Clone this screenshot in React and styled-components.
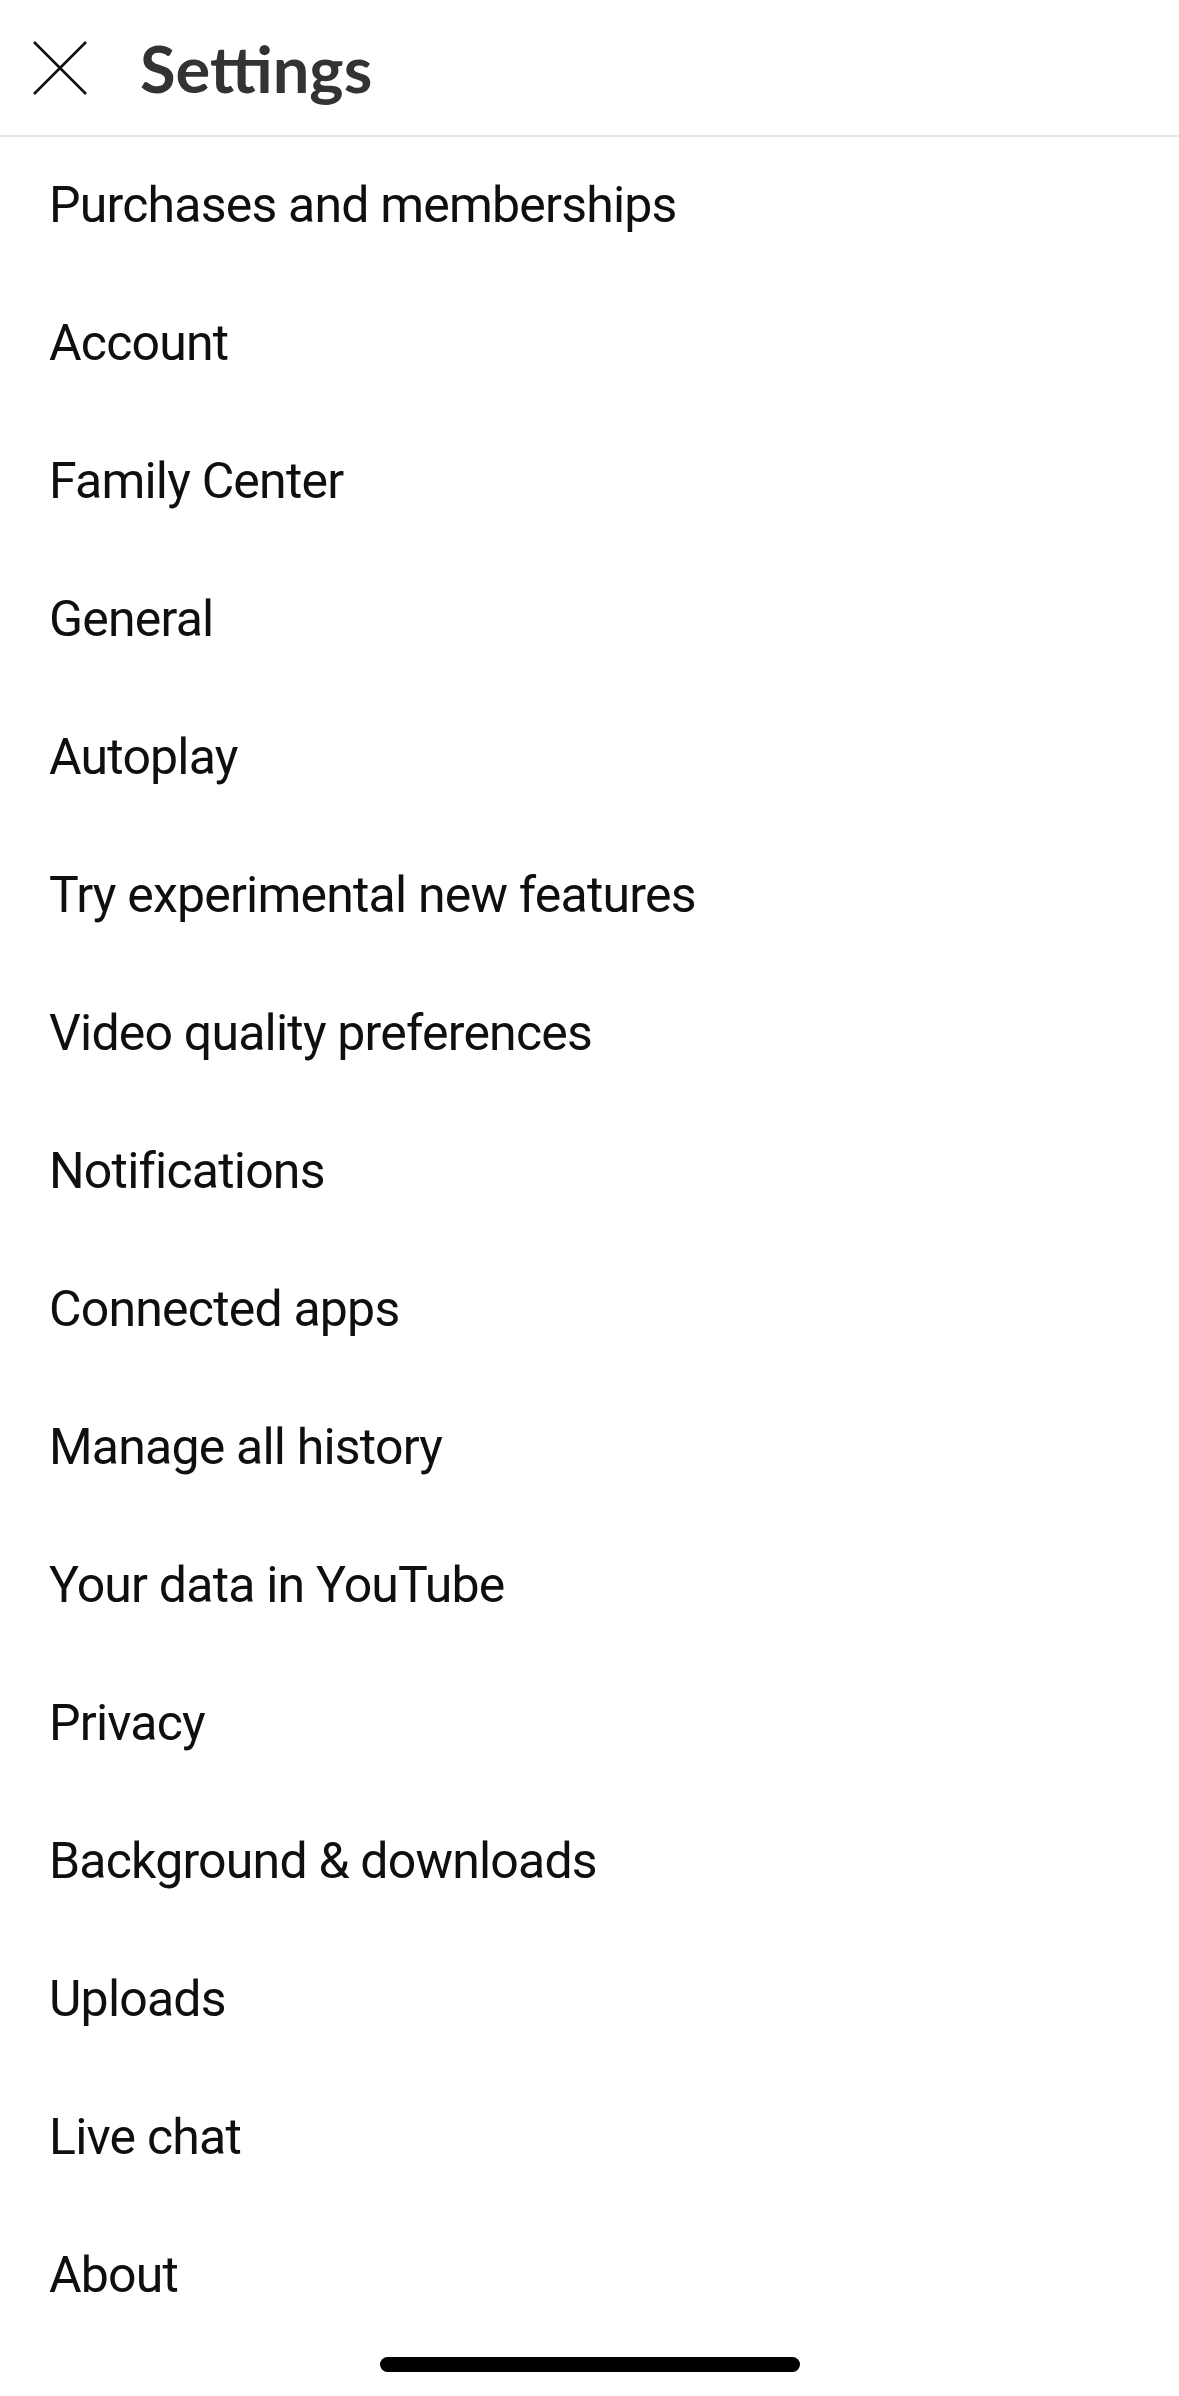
import React from "react";
import styled, { createGlobalStyle } from "styled-components";

const Global = createGlobalStyle`
  html, body { margin: 0; padding: 0; background: #fff; }
  body { font-family: Roboto, "Liberation Sans", sans-serif; -webkit-font-smoothing: antialiased; }
  * { box-sizing: border-box; }
`;

const Page = styled.div`
  width: 1179px;
  height: 2396px;
  background: #fff;
  display: flex;
  flex-direction: column;
  overflow: hidden;
`;

const Header = styled.header`
  height: 137px;
  flex: 0 0 137px;
  display: flex;
  align-items: center;
  padding-left: 33px;
  border-bottom: 2px solid #e6e6e6;
`;

const CloseButton = styled.button`
  width: 54px;
  height: 54px;
  padding: 0;
  margin: 0 53px 0 0;
  border: none;
  background: none;
  display: flex;
  align-items: center;
  justify-content: center;
`;

const Title = styled.h1`
  margin: 0;
  font-family: Lato, "Open Sans", sans-serif;
  font-weight: 700;
  font-size: 65px;
  color: #333;
  line-height: 1;
  transform: translateY(1px);
`;

const List = styled.ul`
  list-style: none;
  margin: 0;
  padding: 0;
`;

const Row = styled.li`
  height: 138px;
  display: flex;
  align-items: center;
  padding-left: 49px;
  font-family: Roboto, "Liberation Sans", sans-serif;
  font-size: 50px;
  letter-spacing: -0.8px;
  color: #0f0f0f;
`;

const Label = styled.span`
  transform: translateY(-1px);
`;

const HomeBar = styled.div`
  margin-top: auto;
  margin-bottom: 24px;
  align-self: center;
  width: 420px;
  height: 15px;
  border-radius: 8px;
  background: #000;
`;

const items = [
  "Purchases and memberships",
  "Account",
  "Family Center",
  "General",
  "Autoplay",
  "Try experimental new features",
  "Video quality preferences",
  "Notifications",
  "Connected apps",
  "Manage all history",
  "Your data in YouTube",
  "Privacy",
  "Background & downloads",
  "Uploads",
  "Live chat",
  "About",
];

export default function App() {
  return (
    <Page>
      <Global />
      <Header>
        <CloseButton aria-label="Close">
          <svg width="54" height="54" viewBox="0 0 54 54">
            <path d="M1 1 L53 53 M53 1 L1 53" stroke="#111" strokeWidth="2.6" fill="none" />
          </svg>
        </CloseButton>
        <Title>Settings</Title>
      </Header>
      <List>
        {items.map((t) => (
          <Row key={t}>
            <Label>{t}</Label>
          </Row>
        ))}
      </List>
      <HomeBar />
    </Page>
  );
}
